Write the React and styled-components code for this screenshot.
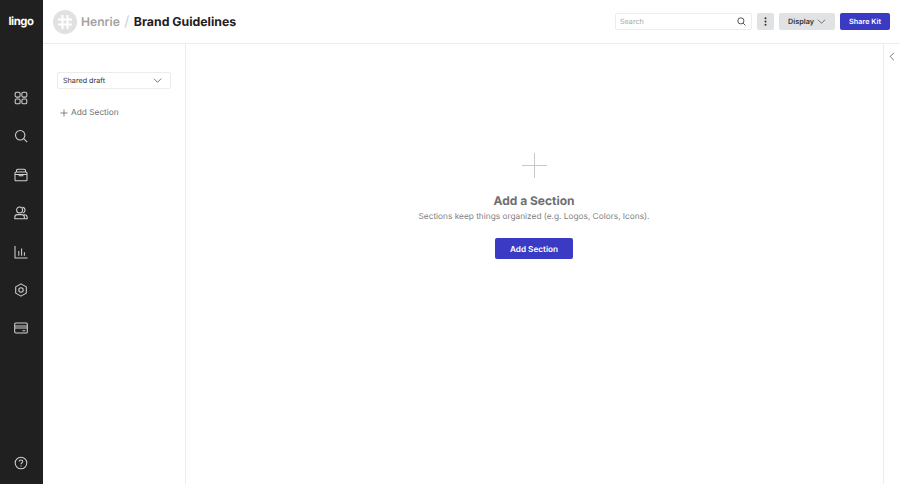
import React from 'react';
import styled, { createGlobalStyle } from 'styled-components';

const Global = createGlobalStyle`
  html, body { margin: 0; padding: 0; height: 100%; background: #fff; }
  body { font-family: Inter, "Liberation Sans", sans-serif; font-optical-sizing: none; text-rendering: geometricPrecision; }
  * { box-sizing: border-box; }
`;
const Page = styled.div`display: flex; width: 900px; height: 484px; overflow: hidden;`;
const Rail = styled.nav`
  width: 43px; flex: none; background: #202020; display: flex; flex-direction: column; align-items: center;
  padding: 14px 1px 14px 0;
`;
const Logo = styled.div`
  color: #fff; font-size: 11.3px; font-weight: 700; letter-spacing: -0.4px; line-height: 14px; height: 14px; margin-bottom: 63px;
`;
const RailIcons = styled.div`display: flex; flex-direction: column; align-items: center; gap: 24.4px; flex: 1;`;
const RailIcon = styled.svg`
  width: 14px; height: 14px; display: block; fill: none; stroke: #d0d0d0; stroke-width: 1.05; stroke-linejoin: round;
`;
const Main = styled.div`flex: 1; display: flex; flex-direction: column; min-width: 0;`;
const Header = styled.header`
  height: 44px; flex: none; border-bottom: 1px solid #ececec; display: flex; align-items: center; padding: 0 10px 0 10px;
`;
const Avatar = styled.div`
  width: 24px; height: 24px; border-radius: 50%; background: #e1e1e1; display: flex; align-items: center; justify-content: center; margin-right: 4px;
`;
const Crumb = styled.span`
  font-size: 12.1px; line-height: 18px; font-weight: 600; color: #a3a3a3;
`;
const Slash = styled.span`font-size: 14px; font-weight: 400; color: #d0d0d0; margin: 0 4.5px;`;
const Title = styled.h1`margin: 0; font-size: 12.3px; line-height: 18px; font-weight: 700; color: #202020;`;
const Spacer = styled.div`flex: 1;`;
const SearchBox = styled.div`
  width: 137px; height: 17px; border: 1px solid #ececec; border-radius: 2px; display: flex; align-items: center; justify-content: space-between; padding: 0 5px 0 4px;
  font-size: 7.2px; color: #a8a8a8; margin-right: 5px;
`;
const Btn = styled.button`
  height: 17px; border: 0; border-radius: 2px; padding: 0; font-family: inherit; font-size: 7.3px; font-weight: 600; text-rendering: geometricPrecision;
  background: ${p => (p.$primary ? '#3a3ac4' : '#e1e2e3')}; color: ${p => (p.$primary ? '#fff' : '#333')};
  display: flex; align-items: center; justify-content: center; gap: 3px; flex: none; width: ${p => p.$w}px; margin-left: ${p => p.$ml || 0}px;
`;
const Body = styled.div`flex: 1; display: flex; min-height: 0;`;
const Side = styled.aside`
  width: 143px; flex: none; border-right: 1px solid #ececec; padding: 28px 14px 0 14px;
`;
const Select = styled.div`
  height: 17px; border: 1px solid #ececec; border-radius: 2px; display: flex; align-items: center; justify-content: space-between;
  padding: 0 8px 0 5px; font-size: 7.2px; color: #333;
`;
const AddLink = styled.div`
  display: flex; align-items: center; gap: 3px; margin-top: 17px; margin-left: 3px; font-size: 8.3px; line-height: 14px; color: #6e6e6e;
`;
const Center = styled.main`
  flex: 1; display: flex; flex-direction: column; align-items: center; padding: 109px 1px 0 0;
`;
const BigPlus = styled.svg`width: 25px; height: 25px; stroke: #c8c8c8; stroke-width: 1; display: block; margin-bottom: 15px;`;
const EmptyTitle = styled.h2`margin: 0; font-size: 12px; line-height: 16px; font-weight: 700; color: #6f6f6f;`;
const EmptyText = styled.p`margin: 2px 0 0; font-size: 8.3px; line-height: 13px; color: #808080;`;
const CTA = styled.button`
  margin-top: 14px; width: 78px; height: 21px; border: 0; border-radius: 2px; background: #3a3ac4; color: #fff;
  font-family: inherit; font-size: 8.2px; font-weight: 600; text-rendering: geometricPrecision;
`;
const Collapse = styled.div`width: 17px; flex: none; border-left: 1px solid #ececec; display: flex; justify-content: center; padding-top: 8px;`;

const Chevron = ({ size = 8, color = '#666' }) => (
  <svg width={size} height={size} viewBox="0 0 10 10" fill="none" stroke={color} strokeWidth="1"><path d="M1 3l4 4 4-4" /></svg>
);

const icons = [
  <g key="a"><rect x="1.2" y="1.2" width="4.9" height="4.9" rx="1.4" /><rect x="7.9" y="1.2" width="4.9" height="4.9" rx="1.4" /><rect x="1.2" y="7.9" width="4.9" height="4.9" rx="1.4" /><rect x="7.9" y="7.9" width="4.9" height="4.9" rx="1.4" /></g>,
  <g key="b"><circle cx="6.2" cy="6.2" r="4.7" /><path d="M9.7 9.7l3.5 3.5" /></g>,
  <g key="c"><rect x="1" y="4" width="12" height="8.8" rx="1" /><path d="M2.5 4V2.6Q2.5 1.3 3.8 1.3H10.2Q11.5 1.3 11.5 2.6V4M1 6.5H13M5.2 6.5V7.8H8.8V6.5" /></g>,
  <g key="d"><circle cx="5.6" cy="4" r="3" /><path d="M0.8 12.8V11.4Q0.8 8.6 3.6 8.6H7.6Q10.4 8.6 10.4 11.4V12.8ZM8.4 1.3Q11 1.5 11 4T8.8 6.9M10.2 8.6Q13.2 9 13.2 11.6V12.8H11" /></g>,
  <g key="e"><path d="M1 1V13H13.5M4.8 10.8V6M7.6 10.8V3.4M10.4 10.8V7.2" /></g>,
  <g key="f"><path d="M7 .9L12.3 3.9V10.1L7 13.1L1.7 10.1V3.9Z" /><circle cx="7" cy="7" r="2.2" /></g>,
  <g key="g"><rect x=".7" y="2" width="12.6" height="10" rx="1" /><path d="M.7 5H13.3M.7 7H13.3M8.5 9.8H11.3" /></g>,
];

export default function App() {
  return (
    <>
      <Global />
      <Page>
        <Rail>
          <Logo>lingo</Logo>
          <RailIcons>
            {icons.map((ic, i) => <RailIcon key={i} viewBox="0 0 14 14">{ic}</RailIcon>)}
          </RailIcons>
          <RailIcon viewBox="0 0 14 14">
            <circle cx="7" cy="7" r="5.8" />
            <path d="M5.2 5.6Q5.2 3.9 7 3.9T8.8 5.5C8.8 6.8 7 6.8 7 8.3M7 9.4V10.4" />
          </RailIcon>
        </Rail>
        <Main>
          <Header>
            <Avatar>
              <svg width="14" height="14" viewBox="0 0 14 14" stroke="#fff" strokeWidth="2"><path d="M4.5 0V14M9.5 0V14M0 4.5H14M0 9.5H14" /></svg>
            </Avatar>
            <Crumb>Henrie</Crumb>
            <Slash>/</Slash>
            <Title>Brand Guidelines</Title>
            <Spacer />
            <SearchBox>
              <span>Search</span>
              <svg width="9" height="9" viewBox="0 0 10 10" fill="none" stroke="#444" strokeWidth="1"><circle cx="4.3" cy="4.3" r="3.4" /><path d="M6.8 6.8l2.6 2.6" /></svg>
            </SearchBox>
            <Btn $w={17} aria-label="More">
              <svg width="3" height="9" viewBox="0 0 3 9" fill="#333"><circle cx="1.5" cy="1.2" r="1" /><circle cx="1.5" cy="4.5" r="1" /><circle cx="1.5" cy="7.8" r="1" /></svg>
            </Btn>
            <Btn $w={56} $ml={5}>Display <Chevron size={9} /></Btn>
            <Btn $w={50} $ml={5} $primary>Share Kit</Btn>
          </Header>
          <Body>
            <Side>
              <Select>Shared draft <Chevron size={9} /></Select>
              <AddLink>
                <svg width="8" height="8" viewBox="0 0 9 9" stroke="#777" strokeWidth="1"><path d="M4.5 .5V8.5M.5 4.5H8.5" /></svg>
                Add Section
              </AddLink>
            </Side>
            <Center>
              <BigPlus viewBox="0 0 25 25"><path d="M12.5 0V25M0 12.5H25" /></BigPlus>
              <EmptyTitle>Add a Section</EmptyTitle>
              <EmptyText>Sections keep things organized (e.g. Logos, Colors, Icons).</EmptyText>
              <CTA>Add Section</CTA>
            </Center>
            <Collapse>
              <svg width="8" height="9" viewBox="0 0 8 10" fill="none" stroke="#666" strokeWidth="1"><path d="M6 1L2 5l4 4" /></svg>
            </Collapse>
          </Body>
        </Main>
      </Page>
    </>
  );
}
